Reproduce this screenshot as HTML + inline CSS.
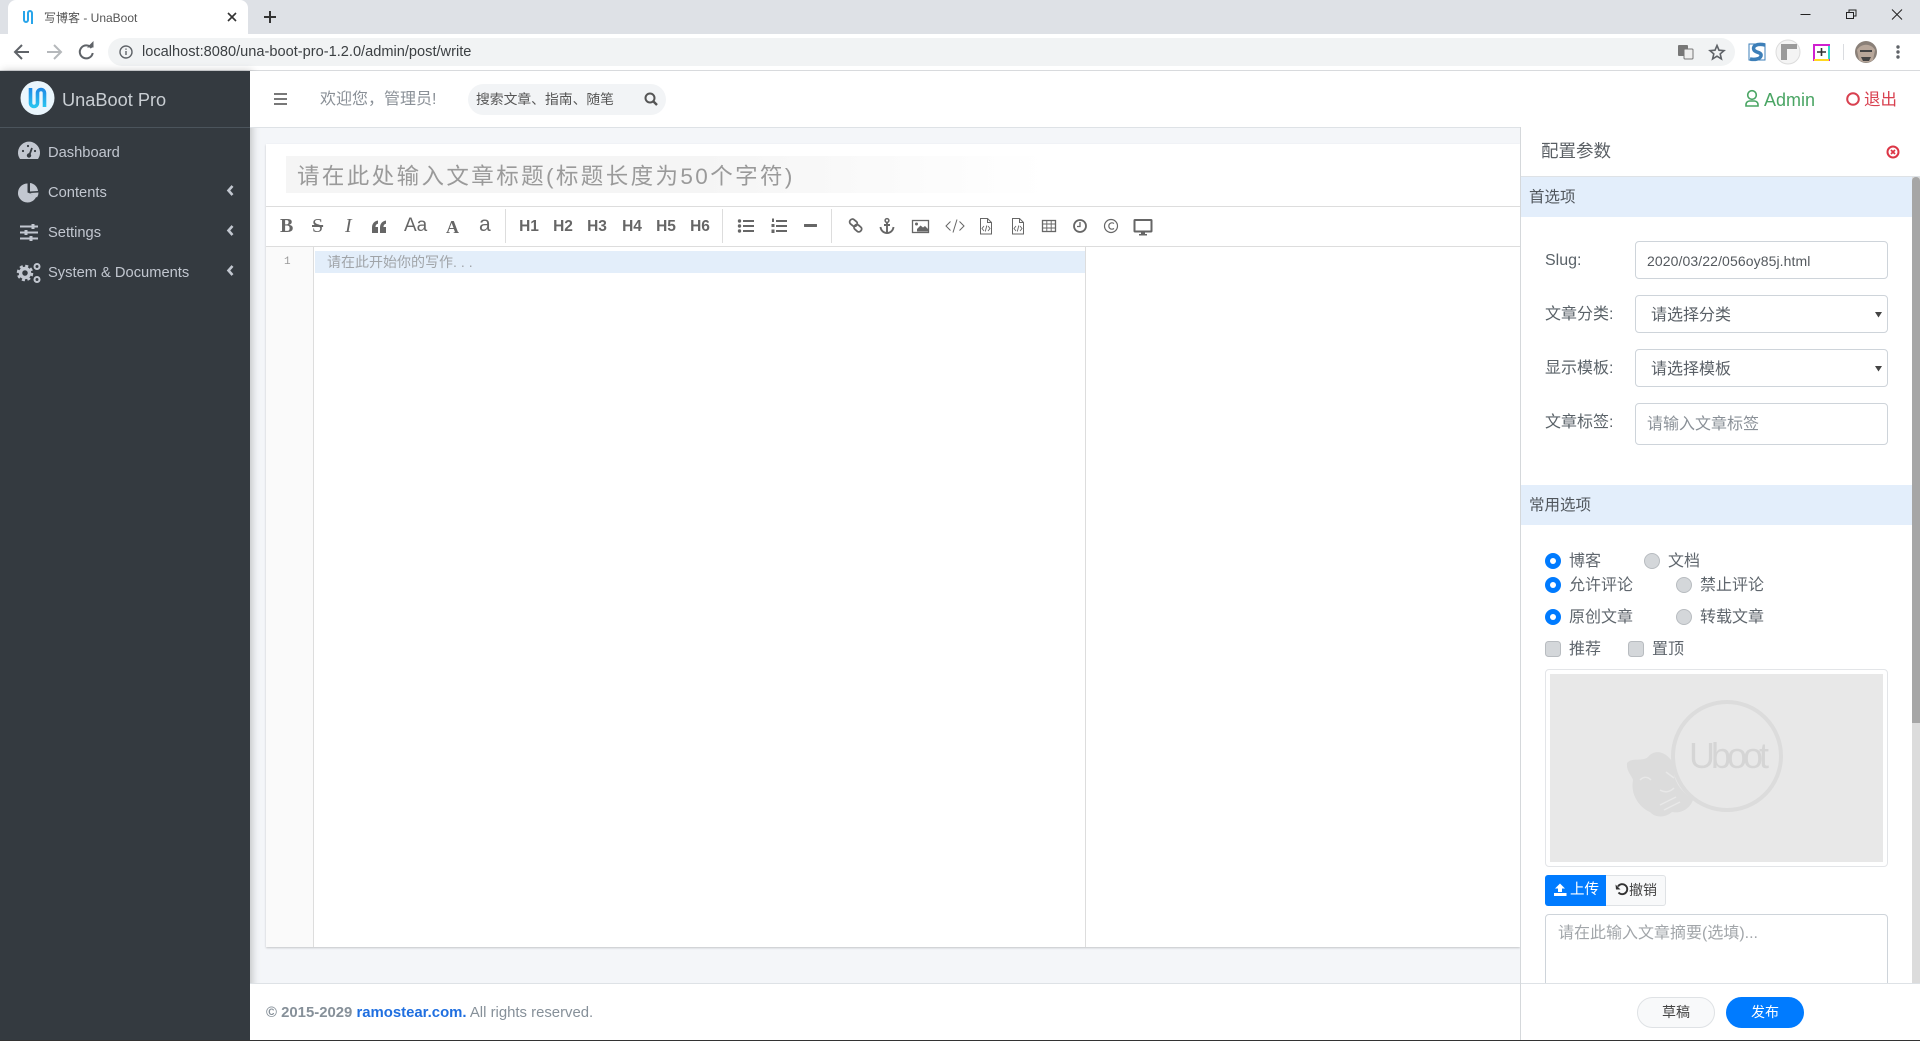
<!DOCTYPE html>
<html lang="zh-CN">
<head>
<meta charset="utf-8">
<title>写博客 - UnaBoot</title>
<style>
html,body{margin:0;padding:0;width:1920px;height:1041px;overflow:hidden;background:#f4f6f9;font-family:"Liberation Sans","Noto Sans CJK SC",sans-serif;color:#495057}
.a{position:absolute}
.t{position:absolute;white-space:nowrap;line-height:20px;height:20px}
.tb{font:bold 15.5px/20px "Liberation Sans",sans-serif;color:#666;top:217px;position:absolute;width:30px;text-align:center}
.sb{color:#c2c7d0;font-size:14.7px;left:48px}
.box{position:absolute;background:#fff;border:1px solid #ced4da;border-radius:4px;box-sizing:border-box}
.lb{font-size:16px;color:#5a6268;left:1545px}
.r{font-size:16px;color:#5f666d}
svg{position:absolute;left:0;top:0}
</style>
</head>
<body>
<!-- browser chrome -->
<div class="a" style="left:0;top:0;width:1920px;height:34px;background:#dee1e6"></div>
<div class="a" style="left:8px;top:0;width:240px;height:34px;background:#fff;border-radius:8px 8px 0 0"></div>
<div class="a" style="left:0;top:34px;width:1920px;height:36px;background:#fff"></div>
<div class="a" style="left:0;top:70px;width:1920px;height:1px;background:#d8dadd"></div>
<div class="a" style="left:108px;top:38px;width:1627px;height:28px;background:#f1f3f4;border-radius:14px"></div>
<div class="t" style="left:44px;top:8px;font-size:12px;color:#555">写博客 - UnaBoot</div>
<div class="t" style="left:142px;top:42px;font-size:14.6px;color:#3c4043">localhost:8080/una-boot-pro-1.2.0/admin/post/write</div>

<!-- sidebar -->
<div class="a" style="left:0;top:71px;width:250px;height:969px;background:#343a40;box-shadow:2px 0 8px rgba(0,0,0,.22)"></div>
<div class="a" style="left:0;top:127px;width:250px;height:1px;background:#4b545c"></div>
<div class="t" style="left:62px;top:90px;font-size:18.2px;color:#c9ced3">UnaBoot Pro</div>
<div class="t sb" style="top:143px">Dashboard</div>
<div class="t sb" style="top:183px">Contents</div>
<div class="t sb" style="top:223px">Settings</div>
<div class="t sb" style="top:263px">System &amp; Documents</div>

<!-- header -->
<div class="a" style="left:250px;top:71px;width:1670px;height:57px;background:#fff;border-bottom:1px solid #dee2e6;box-sizing:border-box"></div>
<div class="t" style="left:320px;top:90px;font-size:16px;color:#8a9097">欢迎您，管理员!</div>
<div class="a" style="left:468px;top:84px;width:198px;height:31px;background:#f2f4f6;border-radius:16px"></div>
<div class="t" style="left:476px;top:90px;font-size:13.8px;color:#555">搜索文章、指南、随笔</div>
<div class="t" style="left:1764px;top:90px;font-size:18px;color:#4aa564">Admin</div>
<div class="t" style="left:1864px;top:90px;font-size:16.5px;color:#d8404f">退出</div>

<!-- editor card -->
<div class="a" style="left:266px;top:144px;width:1254px;height:803px;background:#fff;box-shadow:0 1px 2px rgba(0,0,0,.2)"></div>
<div class="a" style="left:286px;top:156px;width:760px;height:37px;background:linear-gradient(90deg,#f5f5f5 0,#f5f5f5 55%,#fff 100%)"></div>
<div class="t" style="left:297px;top:167px;font-size:22.5px;letter-spacing:2.4px;color:#9a9a9a">请在此处输入文章标题(标题长度为50个字符)</div>
<div class="a" style="left:266px;top:206px;width:1254px;height:1px;background:#ddd"></div>
<div class="a" style="left:266px;top:246px;width:1254px;height:1px;background:#ddd"></div>
<div class="a" style="left:266px;top:247px;width:47px;height:700px;background:#fafafa;border-right:1px solid #ddd"></div>
<div class="a" style="left:315px;top:251px;width:770px;height:22px;background:#e3eefa"></div>
<div class="a" style="left:1085px;top:247px;width:1px;height:700px;background:#ddd"></div>
<div class="t" style="left:284px;top:252px;font:11px/20px 'Liberation Mono',monospace;color:#999">1</div>
<div class="t" style="left:327px;top:252px;font-size:14px;color:#a0a4a8">请在此开始你的写作<span style="letter-spacing:4px">...</span></div>

<!-- toolbar text glyphs -->
<div class="t" style="left:280px;top:216px;font:bold 20px/20px 'Liberation Serif',serif;color:#666">B</div>
<div class="t" style="left:312px;top:216px;font:20px/20px 'Liberation Serif',serif;color:#666;text-decoration:line-through">S</div>
<div class="t" style="left:345px;top:216px;font:italic 20px/20px 'Liberation Serif',serif;color:#666">I</div>
<div class="t" style="left:404px;top:216px;font:19px/20px 'Liberation Sans',sans-serif;color:#666">Aa</div>
<div class="t" style="left:446px;top:217px;font:bold 18px/20px 'Liberation Serif',serif;color:#666">A</div>
<div class="t" style="left:479px;top:215px;font:21px/20px 'Liberation Sans',sans-serif;color:#666">a</div>
<div class="tb" style="left:514px">H1</div>
<div class="tb" style="left:548px">H2</div>
<div class="tb" style="left:582px">H3</div>
<div class="tb" style="left:617px">H4</div>
<div class="tb" style="left:651px">H5</div>
<div class="tb" style="left:685px">H6</div>
<div class="a" style="left:505px;top:209px;width:1px;height:34px;background:#ddd"></div>
<div class="a" style="left:722px;top:209px;width:1px;height:34px;background:#ddd"></div>
<div class="a" style="left:831px;top:209px;width:1px;height:34px;background:#ddd"></div>

<!-- footer -->
<div class="a" style="left:250px;top:983px;width:1270px;height:57px;background:#fff;border-top:1px solid #dee2e6;box-sizing:border-box"></div>
<div class="t" style="left:266px;top:1003px;font-size:14.9px;color:#869099"><b>© 2015-2029 <span style="color:#1f6fe0">ramostear.com.</span></b> All rights reserved.</div>

<!-- right panel -->
<div class="a" style="left:1520px;top:127px;width:400px;height:913px;background:#fff;border-left:1px solid #d5d8db;box-sizing:border-box"></div>
<div class="a" style="left:1521px;top:176px;width:399px;height:1px;background:#dee2e6"></div>
<div class="t" style="left:1541px;top:141px;font-size:17.5px;color:#5a5f64">配置参数</div>
<div class="a" style="left:1521px;top:177px;width:391px;height:40px;background:#e3eefb"></div>
<div class="t" style="left:1529px;top:188px;font-size:15.5px;color:#50565c">首选项</div>
<div class="a" style="left:1521px;top:485px;width:391px;height:40px;background:#e3eefb"></div>
<div class="t" style="left:1529px;top:496px;font-size:15.5px;color:#50565c">常用选项</div>
<div class="a" style="left:1912px;top:177px;width:8px;height:806px;background:#dcdcdc"></div>
<div class="a" style="left:1912px;top:177px;width:8px;height:546px;background:#a6a6a6;border-radius:4px 4px 0 0"></div>

<div class="t lb" style="top:251px">Slug:</div>
<div class="t lb" style="top:305px">文章分类:</div>
<div class="t lb" style="top:359px">显示模板:</div>
<div class="t lb" style="top:413px">文章标签:</div>

<div class="box" style="left:1635px;top:241px;width:253px;height:38px"></div>
<div class="box" style="left:1635px;top:295px;width:253px;height:38px"></div>
<div class="box" style="left:1635px;top:349px;width:253px;height:38px"></div>
<div class="box" style="left:1635px;top:403px;width:253px;height:42px"></div>
<div class="t" style="left:1647px;top:251px;font-size:14px;color:#54595e;letter-spacing:.1px">2020/03/22/056oy85j.html</div>
<div class="t" style="left:1651px;top:306px;font-size:16px;color:#5a6067">请选择分类</div>
<div class="t" style="left:1651px;top:360px;font-size:16px;color:#5a6067">请选择模板</div>
<div class="t" style="left:1647px;top:415px;font-size:16px;color:#8a9097">请输入文章标签</div>

<div class="t r" style="left:1569px;top:552px">博客</div>
<div class="t r" style="left:1668px;top:552px">文档</div>
<div class="t r" style="left:1569px;top:576px">允许评论</div>
<div class="t r" style="left:1700px;top:576px">禁止评论</div>
<div class="t r" style="left:1569px;top:608px">原创文章</div>
<div class="t r" style="left:1700px;top:608px">转载文章</div>
<div class="t r" style="left:1569px;top:640px">推荐</div>
<div class="t r" style="left:1652px;top:640px">置顶</div>

<div class="box" style="left:1545px;top:669px;width:343px;height:198px;border-color:#e3e5e8"></div>
<div class="a" style="left:1550px;top:674px;width:333px;height:188px;background:#e8e8e8"></div>

<div class="a" style="left:1545px;top:875px;width:61px;height:31px;background:#007bff;border-radius:3px 0 0 3px"></div>
<div class="a" style="left:1606px;top:875px;width:60px;height:31px;background:#f8f9fa;border:1px solid #dfe2e5;border-left:0;border-radius:0 3px 3px 0;box-sizing:border-box"></div>
<div class="t" style="left:1570px;top:880px;font-size:14.5px;color:#fff">上传</div>
<div class="t" style="left:1629px;top:880px;font-size:14px;color:#444">撤销</div>
<div class="box" style="left:1545px;top:914px;width:343px;height:90px"></div>
<div class="t" style="left:1558px;top:924px;font-size:16px;color:#a2a6aa">请在此输入文章摘要(选填)...</div>

<div class="a" style="left:1521px;top:983px;width:399px;height:57px;background:#fff;border-top:1px solid #dee2e6;box-sizing:border-box"></div>
<div class="a" style="left:1637px;top:997px;width:78px;height:31px;background:#f8f9fa;border:1px solid #dfe2e5;border-radius:16px;box-sizing:border-box"></div>
<div class="a" style="left:1726px;top:997px;width:78px;height:31px;background:#007bff;border-radius:16px"></div>
<div class="t" style="left:1662px;top:1002px;font-size:14px;color:#444">草稿</div>
<div class="t" style="left:1751px;top:1002px;font-size:14px;color:#fff">发布</div>
<div class="a" style="left:0;top:1040px;width:1920px;height:1px;background:#333"></div>

<svg width="1920" height="1041" viewBox="0 0 1920 1041" xmlns="http://www.w3.org/2000/svg">
<defs>
<linearGradient id="g" x1="0" y1="0" x2="0" y2="1"><stop offset="0" stop-color="#1e88e5"/><stop offset="1" stop-color="#29c5f0"/></linearGradient>
</defs>
<!-- favicon / tab -->
<path d="M24 11V20a2 2 0 0 0 4 0V13a2 2 0 0 1 4 0V24" fill="none" stroke="#29a5ea" stroke-width="2"/>
<path d="M228 13l8 8M236 13l-8 8" stroke="#333" stroke-width="1.6"/>
<path d="M270 11v12M264 17h12" stroke="#333" stroke-width="2"/>
<!-- nav -->
<path d="M29 52H16M22 45l-7 7 7 7" fill="none" stroke="#5f6368" stroke-width="2"/>
<path d="M47 52h13M54 45l7 7-7 7" fill="none" stroke="#b5b8bb" stroke-width="2"/>
<path d="M91.500 48a6.500 6.500 0 1 0 1.200 5" fill="none" stroke="#5f6368" stroke-width="2"/>
<path d="M87 47.500h6.500V41z" fill="#5f6368"/>
<circle cx="126" cy="52" r="6" fill="none" stroke="#5f6368" stroke-width="1.400"/>
<path d="M126 51v4M126 48.500v1.300" stroke="#5f6368" stroke-width="1.400"/>
<!-- address right -->
<rect x="1678" y="45" width="10" height="11" rx="1" fill="#777"/><rect x="1684" y="49" width="9" height="10" rx="1" fill="#eee" stroke="#777"/>
<path d="M1717 45.500l2 4.700 5 .4-3.800 3.300 1.200 5-4.400-2.700-4.400 2.700 1.200-5-3.800-3.300 5-.4z" fill="none" stroke="#5f6368" stroke-width="1.600"/>
<rect x="1749" y="44" width="16" height="16" fill="#fff" stroke="#3d7fb8"/>
<path d="M1765 45c-8-2-13 1-11 5 2 3 8 2 7 6-1 3-6 4-11 3" fill="none" stroke="#3d7fb8" stroke-width="3.500"/>
<circle cx="1788" cy="52" r="12" fill="#f4f4f4" stroke="#dcdcdc"/>
<path d="M1781 44h16v5h-10v11h-6z" fill="#9a9a9a"/>
<rect x="1814" y="45" width="15" height="15" fill="#fff" stroke="#d020d0" stroke-width="2"/>
<path d="M1814 60h15" stroke="#ffd820" stroke-width="2"/><path d="M1829 46v13" stroke="#30d8c8" stroke-width="2"/>
<path d="M1817 52h9M1821.500 48v8" stroke="#333" stroke-width="1.600"/>
<path d="M1843.500 44v16" stroke="#dadce0"/>
<circle cx="1866" cy="52" r="11" fill="#8a8078"/><path d="M1857 50c4-7 14-7 18 0l-2 10c-4 3-10 3-14 0z" fill="#b8a79a"/><path d="M1860 50h12v2h-12zM1861 57h10l-2 4h-6z" fill="#444"/>
<circle cx="1898" cy="47" r="1.700" fill="#5f6368"/><circle cx="1898" cy="52" r="1.700" fill="#5f6368"/><circle cx="1898" cy="57" r="1.700" fill="#5f6368"/>
<!-- window controls -->
<path d="M1800.500 14.500h10" stroke="#222"/>
<path d="M1846.500 12.500h7v6h-7zM1849 12.500v-2.500h7v6h-2.500" fill="none" stroke="#222"/>
<path d="M1892 9.500l10 10M1902 9.500l-10 10" stroke="#222"/>
<!-- sidebar logo -->
<circle cx="37.500" cy="98" r="17" fill="#eaf6fd"/>
<path d="M30.500 88V103a3.500 3.500 0 0 0 7 0V93a3.500 3.500 0 0 1 7 0V107" fill="none" stroke="url(#g)" stroke-width="3.600"/>
<!-- sidebar icons -->
<path d="M20 159a11 11 0 1 1 18 0z" fill="#c2c7d0"/>
<path d="M29 156l3-8" stroke="#343a40" stroke-width="1.800"/><circle cx="29" cy="155.500" r="2.200" fill="#343a40"/><circle cx="23" cy="151" r="1.100" fill="#343a40"/><circle cx="35" cy="151" r="1.100" fill="#343a40"/><circle cx="28" cy="146" r="1.100" fill="#343a40"/>
<path d="M27.500 183.500a9.500 9.500 0 1 0 9 12.500l-9-3.500z" fill="#c2c7d0"/>
<path d="M30 183a9 9 0 0 1 8 8l-8 .500z" fill="#c2c7d0"/><path d="M30 193l8.500-.500a9 9 0 0 1-1.500 5z" fill="#c2c7d0"/>
<path d="M20 226.500h18M20 232.500h18M20 238.500h18" stroke="#c2c7d0" stroke-width="2"/>
<path d="M33 224v5M26 230v5M31 236v5" stroke="#c2c7d0" stroke-width="3"/>
<circle cx="25" cy="273" r="4.500" fill="none" stroke="#c2c7d0" stroke-width="3.500"/>
<circle cx="25" cy="273" r="7" fill="none" stroke="#c2c7d0" stroke-width="2.500" stroke-dasharray="3 2.500"/>
<circle cx="37" cy="266.500" r="2.500" fill="none" stroke="#c2c7d0" stroke-width="2"/>
<circle cx="37" cy="279.500" r="2.500" fill="none" stroke="#c2c7d0" stroke-width="2"/>
<path d="M232.500 186l-4 4.500 4 4.500M232.500 226l-4 4.500 4 4.500M232.500 266l-4 4.500 4 4.500" fill="none" stroke="#c2c7d0" stroke-width="2.600"/>
<!-- header icons -->
<path d="M274 94h13M274 99h13M274 104h13" stroke="#666" stroke-width="1.800"/>
<circle cx="650" cy="98" r="4.500" fill="none" stroke="#555" stroke-width="2"/><path d="M653.500 101.500l3.500 3.500" stroke="#555" stroke-width="2.400"/>
<circle cx="1752" cy="95" r="4.300" fill="none" stroke="#4aa564" stroke-width="1.600"/><path d="M1746 106v-1.500a3.500 3.500 0 0 1 3.500-3.500h5a3.500 3.500 0 0 1 3.500 3.500v1.500z" fill="none" stroke="#4aa564" stroke-width="1.600"/>
<circle cx="1853" cy="99" r="5.800" fill="none" stroke="#d8404f" stroke-width="2"/>
<!-- close -->
<circle cx="1893" cy="152" r="5.500" fill="none" stroke="#dc3545" stroke-width="2"/><path d="M1891 150l4 4M1895 150l-4 4" stroke="#dc3545" stroke-width="1.700"/>
<!-- toolbar svg icons -->
<g fill="#666" stroke="none">
<path d="M378 220.500c-3 .5-6 2.500-6 7v5.500h6v-6h-2.500c0-2 1-3 2.500-3.300zM386 220.500c-3 .5-6 2.500-6 7v5.500h6v-6h-2.500c0-2 1-3 2.500-3.300z"/>
<circle cx="739.500" cy="221" r="1.700"/><circle cx="739.500" cy="226" r="1.700"/><circle cx="739.500" cy="231" r="1.700"/>
<rect x="743" y="220" width="11" height="2"/><rect x="743" y="225" width="11" height="2"/><rect x="743" y="230" width="11" height="2"/>
<rect x="776" y="220" width="11" height="2"/><rect x="776" y="225" width="11" height="2"/><rect x="776" y="230" width="11" height="2"/>
<rect x="772" y="218.500" width="2" height="3.500"/><rect x="771.500" y="224" width="3" height="3"/><rect x="771.500" y="229.500" width="3" height="3.500"/>
<rect x="804" y="224" width="13" height="3" rx=".5"/>
</g>
<g fill="none" stroke="#666">
<rect x="849.500" y="220" width="8" height="5.500" rx="2.500" transform="rotate(40 853.500 222.700)" stroke-width="1.800"/>
<rect x="854" y="225.500" width="8" height="5.500" rx="2.500" transform="rotate(40 858 228)" stroke-width="1.800"/>
<circle cx="887" cy="220.500" r="1.900" stroke-width="1.500"/><path d="M887 222.500v10.500M884 225h6M880.500 227c.5 4 3.500 6 6.500 6s6-2 6.500-6" stroke-width="1.900"/>
<rect x="912.500" y="220.500" width="16" height="12" stroke-width="1.300"/>
<path d="M950.500 221.500l-4.500 4.500 4.500 4.500M959.500 221.500l4.500 4.500-4.500 4.500M957 219.500l-4 13" stroke-width="1"/>
<path d="M980.500 218.500h7l4 4v11.500h-11zM987.500 218.500v4h4" stroke-width="1"/><path d="M984 226l-2 2.500 2 2.500M988 226l2 2.500-2 2.500M986.800 225.500l-1.500 6" stroke-width=".9"/>
<path d="M1012.500 218.500h7l4 4v11.500h-11zM1019.500 218.500v4h4" stroke-width="1"/><path d="M1016 226l-2 2.500 2 2.500M1020 226l2 2.500-2 2.500M1018.800 225.500l-1.500 6" stroke-width=".9"/>
<rect x="1042.500" y="220.500" width="13" height="11" stroke-width="1.300"/><path d="M1042.500 224h13M1042.500 228h13M1046.800 220.500v11M1051.200 220.500v11" stroke-width=".9"/>
<circle cx="1080" cy="226" r="6" stroke-width="1.800"/><path d="M1080 222v4.500h-3" stroke-width="1.300"/>
<circle cx="1111" cy="226" r="6.500" stroke-width="1.200"/>
<path d="M1114 223.500a3.200 3.200 0 1 0 0 5" stroke-width="1.200"/>
</g>
<path d="M917 229l3.500-3.500 2.500 2 2-1.500 3 3v2.500h-11z" fill="#666"/><circle cx="916.500" cy="224" r="1.500" fill="#666"/>
<path d="M1135 219h16a1.500 1.500 0 0 1 1.500 1.500V231a1.500 1.500 0 0 1-1.500 1.500h-6v1.500h2v1.500h-8V234h2v-1.500h-6A1.500 1.500 0 0 1 1133.500 231V220.500A1.500 1.500 0 0 1 1135 219zM1135.500 221v9.500h15V221z" fill="#666" fill-rule="evenodd"/>
<!-- select arrows -->
<path d="M1875 312l3.500 5.500 3.500-5.500zM1875 366l3.500 5.500 3.500-5.500z" fill="#444"/>
<!-- radios -->
<g>
<circle cx="1553" cy="561" r="8" fill="#007bff"/><circle cx="1553" cy="561" r="3" fill="#fff"/>
<circle cx="1553" cy="585" r="8" fill="#007bff"/><circle cx="1553" cy="585" r="3" fill="#fff"/>
<circle cx="1553" cy="617" r="8" fill="#007bff"/><circle cx="1553" cy="617" r="3" fill="#fff"/>
<circle cx="1652" cy="561" r="7.500" fill="#d4d7da" stroke="#b8bcc0"/>
<circle cx="1684" cy="585" r="7.500" fill="#d4d7da" stroke="#b8bcc0"/>
<circle cx="1684" cy="617" r="7.500" fill="#d4d7da" stroke="#b8bcc0"/>
<rect x="1545.500" y="641.500" width="15" height="15" rx="3" fill="#d4d7da" stroke="#b8bcc0"/>
<rect x="1628.500" y="641.500" width="15" height="15" rx="3" fill="#d4d7da" stroke="#b8bcc0"/>
</g>
<!-- watermark -->
<path d="M1674 765C1668 752 1655 748 1648 757C1642 762 1632 757 1627 763C1626 771 1632 776 1633 780C1630 795 1640 808 1650 812C1655 818 1665 818 1672 812C1682 814 1690 808 1693 800C1680 790 1672 780 1674 765z" fill="#dcdcdc"/>
<path d="M1640 780c4-4 8-3 11 0M1666 772l8 6M1660 790c5 3 10 2 14-2M1660 805l16-8M1664 810l16-8" stroke="#e8e8e8" stroke-width="1.500" fill="none"/>
<circle cx="1727" cy="756" r="54" fill="#e8e8e8" stroke="#dcdcdc" stroke-width="4"/>
<text x="1689" y="768" font-family="Liberation Sans,sans-serif" font-size="36" fill="#d5d5d5" textLength="80">Uboot</text>
<!-- button icons -->
<path d="M1560 883.500l5 5h-3v3.500h-4v-3.500h-3zM1554 893h12.500v3H1554z" fill="#fff"/>
<path d="M1620 887a5 5 0 1 1 .5 6" fill="none" stroke="#333" stroke-width="1.900" transform="translate(-2 -.5)"/>
<path d="M1615.500 884.500l.5 5h4.500z" fill="#333"/>
</svg>
</body>
</html>
